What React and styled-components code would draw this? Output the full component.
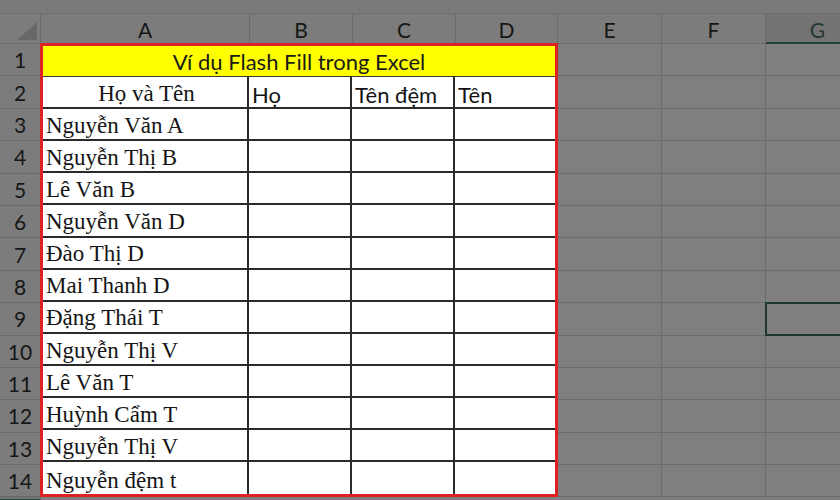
import React from "react";
import styled, { createGlobalStyle } from "styled-components";

const Global = createGlobalStyle`
  html, body { margin: 0; padding: 0; background: #7f7f7f; overflow: hidden; }
  #root { width: 840px; height: 500px; }
`;

const COLS = "41px 209px 103px 103px 102px 104px 104px 104px";
const ROW_H = 32.4;

const Page = styled.div`
  width: 840px;
  height: 500px;
  display: flex;
  flex-direction: column;
  overflow: hidden;
  background: #7f7f7f;
`;

const TopStrip = styled.div`
  height: 13px;
  flex: none;
  background: #7a7a7a;
  border-bottom: 1px solid #6e6e6e;
`;

const Sheet = styled.div`
  display: grid;
  grid-template-columns: ${COLS};
  grid-template-rows: 30px repeat(14, ${ROW_H}px);
  font-family: Lato, "Open Sans", sans-serif;
`;

const Corner = styled.div`
  background: #7c7c7c;
  border-right: 1px solid #6b6b6b;
  border-bottom: 1px solid #6b6b6b;
  display: flex;
  align-items: flex-end;
  justify-content: flex-end;
  padding: 0 3px 3px 0;
`;

const ColHead = styled.div`
  background: ${(p) => (p.$active ? "#737373" : "#7c7c7c")};
  border-right: 1px solid #6b6b6b;
  border-bottom: ${(p) => (p.$active ? "2px solid #244236" : "1px solid #6b6b6b")};
  display: flex;
  align-items: center;
  justify-content: center;
  font-size: 21px;
  color: ${(p) => (p.$active ? "#223a30" : "#161616")};
  padding-top: 2px;
  box-sizing: border-box;
`;

const RowHead = styled.div`
  grid-column: 1;
  grid-row: ${(p) => p.$row + 1};
  background: #7c7c7c;
  border-right: 1px solid #6b6b6b;
  border-bottom: 1px solid #6b6b6b;
  display: flex;
  align-items: center;
  justify-content: center;
  font-size: 21px;
  color: #161616;
  box-sizing: border-box;
`;

const GreyCell = styled.div`
  grid-column: ${(p) => p.$col};
  grid-row: ${(p) => p.$row + 1};
  border-right: 1px solid #6c6c6c;
  border-bottom: 1px solid #6c6c6c;
  box-sizing: border-box;
`;

const Selected = styled.div`
  grid-column: 8;
  grid-row: 10;
  margin: -1px 0 0 -1px;
  border: 2px solid #1f3a2d;
  border-right: none;
`;

const Table = styled.div`
  grid-column: 2 / 6;
  grid-row: 2 / 16;
  margin: -1px 0 0 -1px;
  border: 3px solid #dc2222;
  background: #ffffff;
  display: grid;
  grid-template-columns: 206px 103px 103px 1fr;
  grid-template-rows: 31px repeat(13, 1fr);
  position: relative;
  z-index: 1;
`;

const Title = styled.div`
  grid-column: 1 / 5;
  background: #ffff00;
  border-bottom: 1px solid #3a3a3a;
  display: flex;
  align-items: flex-end;
  justify-content: center;
  font-family: Lato, "Open Sans", sans-serif;
  font-size: 22px;
  color: #1a1a1a;
  padding-bottom: 1px;
  box-sizing: border-box;
`;

const Cell = styled.div`
  border-right: ${(p) => (p.$last ? "none" : "2px solid #2a2a2a")};
  border-bottom: ${(p) => (p.$bottom ? "none" : "2px solid #2a2a2a")};
  display: flex;
  align-items: flex-end;
  justify-content: ${(p) => (p.$center ? "center" : "flex-start")};
  padding: 0 0 0 3px;
  font-family: ${(p) =>
    p.$serif ? '"Liberation Serif", "Times New Roman", serif' : 'Lato, "Open Sans", sans-serif'};
  font-size: ${(p) => (p.$serif ? "23px" : "22px")};
  line-height: 1.15;
  color: #141414;
  white-space: nowrap;
  overflow: hidden;
  box-sizing: border-box;
`;

const names = [
  "Nguyễn Văn A",
  "Nguyễn Thị B",
  "Lê Văn B",
  "Nguyễn Văn D",
  "Đào Thị D",
  "Mai Thanh D",
  "Đặng Thái T",
  "Nguyễn Thị V",
  "Lê Văn T",
  "Huỳnh Cẩm T",
  "Nguyễn Thị V",
  "Nguyễn đệm t",
];

const letters = ["A", "B", "C", "D", "E", "F", "G"];

export default function App() {
  const rows = Array.from({ length: 14 }, (_, i) => i + 1);
  return (
    <Page>
      <Global />
      <TopStrip />
      <Sheet>
        <Corner>
          <svg width="20" height="18" viewBox="0 0 20 18">
            <polygon points="20,0 20,18 0,18" fill="#686868" />
          </svg>
        </Corner>
        {letters.map((l) => (
          <ColHead key={l} $active={l === "G"}>
            {l}
          </ColHead>
        ))}
        <ColHead $active />
        {rows.map((r) => (
          <RowHead key={r} $row={r}>
            {r}
          </RowHead>
        ))}
        {rows.map((r) =>
          [6, 7, 8].map((c) => <GreyCell key={`${r}-${c}`} $row={r} $col={c} />)
        )}
        <Selected />
        <Table>
          <Title>Ví dụ Flash Fill trong Excel</Title>
          <Cell $serif $center>Họ và Tên</Cell>
          <Cell>Họ</Cell>
          <Cell>Tên đệm</Cell>
          <Cell $last>Tên</Cell>
          {names.map((n, i) => {
            const bottom = i === names.length - 1;
            return (
              <React.Fragment key={i}>
                <Cell $serif $bottom={bottom}>{n}</Cell>
                <Cell $bottom={bottom} />
                <Cell $bottom={bottom} />
                <Cell $bottom={bottom} $last />
              </React.Fragment>
            );
          })}
        </Table>
      </Sheet>
    </Page>
  );
}
